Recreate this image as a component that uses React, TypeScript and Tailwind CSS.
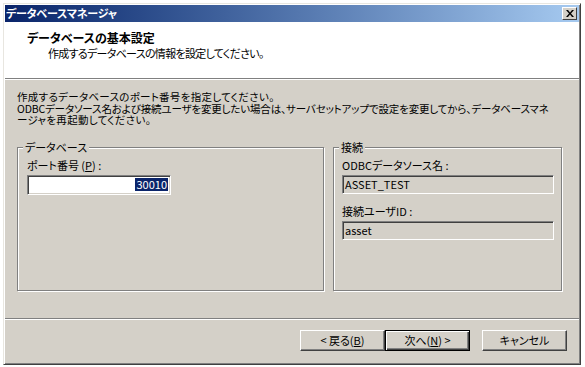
import React from "react";

const font = "font-['MS_UI_Gothic','Noto_Sans_CJK_JP',sans-serif] [font-feature-settings:'palt']";

function Fieldset({ title, className, children }: { title: string; className: string; children: React.ReactNode }) {
  return (
    <div className={`relative border border-[#808080] shadow-[1px_1px_0_#fff,inset_1px_1px_0_#fff] ${className}`}>
      <span className="absolute -top-[7px] left-[5px] bg-[#d4d0c8] px-[2px] text-[11px] leading-[13px]">
        {title}
      </span>
      {children}
    </div>
  );
}

function Button({ children, primary }: { children: React.ReactNode; primary?: boolean }) {
  const edge = primary
    ? "border border-black shadow-[inset_1px_1px_0_#fff,inset_-1px_-1px_0_#404040,inset_-2px_-2px_0_#808080]"
    : "border border-t-white border-l-white border-r-[#404040] border-b-[#404040] shadow-[inset_-1px_-1px_0_#808080]";
  return (
    <div className={`flex h-[21px] w-[85px] items-center justify-center bg-[#d4d0c8] text-[11px] ${edge}`}>
      {children}
    </div>
  );
}

export default function App() {
  return (
    <div className={`h-[367px] w-[585px] bg-white pl-[3px] pt-[3px] text-black ${font}`}>
      <div className="flex h-[362px] w-[578px] flex-col border border-t-[#e8e6e0] border-l-[#e8e6e0] border-r-[#404040] border-b-[#404040] bg-[#d4d0c8] p-px shadow-[inset_1px_1px_0_#fff,inset_-1px_-1px_0_#808080]">
        {/* title bar */}
        <div className="flex h-[17px] shrink-0 items-center justify-between bg-gradient-to-r from-[#0a246a] to-[#a6caf0] pl-[1px] pr-[2px]">
          <span className="text-[11px] font-bold leading-none tracking-[-0.2px] text-white">データベースマネージャ</span>
          <div className="flex h-[13px] w-[15px] items-center justify-center border border-t-white border-l-white border-r-[#404040] border-b-[#404040] bg-[#d4d0c8]">
            <svg width="8" height="7" viewBox="0 0 8 7">
              <path d="M0 0h2l2 2.5L6 0h2L5 3.5 8 7H6L4 4.5 2 7H0l3-3.5z" fill="#000" />
            </svg>
          </div>
        </div>

        {/* header */}
        <div className="h-[57px] shrink-0 border-b border-b-[#808080] bg-white pl-[22px] pt-[9px] shadow-[0_1px_0_#fff]">
          <div className="text-[12px] font-bold leading-[13px]">データベースの基本設定</div>
          <div className="ml-[21px] mt-[3px] text-[11px] leading-[13px] tracking-[-0.7px]">作成するデータベースの情報を設定してください。</div>
        </div>

        {/* body */}
        <div className="flex-1 pl-[12px] pt-[12px]">
          <div className="whitespace-nowrap text-[10.5px] leading-[11.5px]">
            <div className="tracking-[0.3px]">作成するデータベースのポート番号を指定してください。</div>
            <div className="tracking-[-0.15px]">
              ODBCデータソース名および接続ユーザを変更したい場合は、サーバセットアップで設定を変更してから、データベースマネ
            </div>
            <div className="tracking-[0.3px]">ージャを再起動してください。</div>
          </div>

          <div className="mt-[21px] flex gap-[9px]">
            <Fieldset title="データベース" className="h-[144px] w-[307px] pl-[9px] pt-[11px]">
              <div className="text-[11px] leading-[13px]">
                ポート番号 (<span className="underline">P</span>) :
              </div>
              <div className="mt-[3px] flex h-[20px] w-[144px] items-center justify-end border border-t-[#808080] border-l-[#808080] border-r-white border-b-white bg-white pr-[2px] shadow-[inset_1px_1px_0_#404040,inset_-1px_-1px_0_#d4d0c8]">
                <span className="bg-[#0a246a] px-px text-[11px] leading-[13px] text-white">30010</span>
              </div>
            </Fieldset>

            <Fieldset title="接続" className="h-[144px] w-[229px] pl-[8px] pt-[11px]">
              <div className="text-[11px] leading-[13px]">ODBCデータソース名 :</div>
              <div className="mt-[3px] flex h-[19px] w-[212px] items-center border border-t-[#808080] border-l-[#808080] border-r-white border-b-white bg-[#d4d0c8] pl-[2px] text-[11px] shadow-[inset_1px_1px_0_#404040,inset_-1px_-1px_0_#d4d0c8]">
                ASSET_TEST
              </div>
              <div className="mt-[11px] text-[11px] leading-[13px]">接続ユーザID :</div>
              <div className="mt-[3px] flex h-[19px] w-[212px] items-center border border-t-[#808080] border-l-[#808080] border-r-white border-b-white bg-[#d4d0c8] pl-[2px] text-[11px] shadow-[inset_1px_1px_0_#404040,inset_-1px_-1px_0_#d4d0c8]">
                asset
              </div>
            </Fieldset>
          </div>
        </div>

        {/* footer */}
        <div className="h-[45px] shrink-0 border-t border-t-[#808080] shadow-[inset_0_1px_0_#fff]">
          <div className="flex justify-end pr-[12px] pt-[11px]">
            <Button>
              &lt; 戻る(<span className="underline">B</span>)
            </Button>
            <Button primary>
              次へ(<span className="underline">N</span>) &gt;
            </Button>
            <div className="w-[12px]" />
            <Button>キャンセル</Button>
          </div>
        </div>
      </div>
    </div>
  );
}
